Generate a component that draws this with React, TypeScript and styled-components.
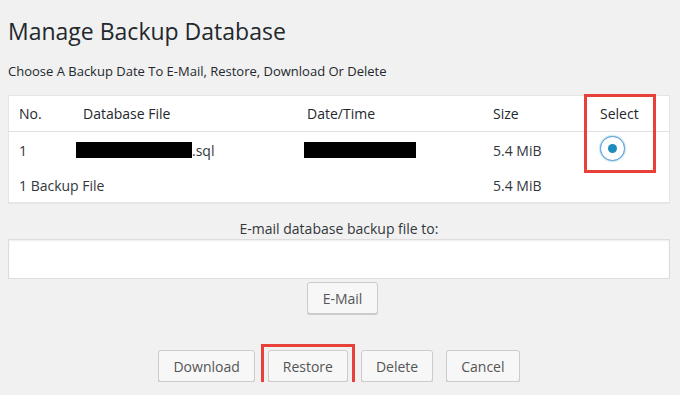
import React from 'react'
import styled, { createGlobalStyle } from 'styled-components'

const GlobalStyle = createGlobalStyle`
  html, body {
    margin: 0;
    padding: 0;
    background: #f1f1f1;
  }
  body {
    font-family: "Open Sans", "Liberation Sans", sans-serif;
    color: #32373c;
  }
`

const columns = '64px 224px 186px 107px 1fr'

const Page = styled.div`
  padding: 17px 10px 0 8px;
`

const Title = styled.h1`
  margin: 0;
  font-size: 23px;
  line-height: 29px;
  font-weight: 400;
  color: #23282d;
`

const Intro = styled.p`
  margin: 16px 0 15px;
  font-size: 13px;
  line-height: 18px;
  color: #23282d;
`

const Table = styled.div`
  position: relative;
  background: #fff;
  border: 1px solid #e5e5e5;
  box-shadow: 0 1px 1px rgba(0, 0, 0, 0.04);
`

const Row = styled.div<{ $height: number; $head?: boolean }>`
  display: grid;
  grid-template-columns: ${columns};
  align-items: center;
  height: ${p => p.$height}px;
  font-size: 14px;
  color: ${p => (p.$head ? '#23282d' : '#32373c')};
  border-bottom: ${p => (p.$head ? '1px solid #e1e1e1' : 'none')};
`

const Cell = styled.div`
  padding-left: 10px;
  white-space: nowrap;
  display: flex;
  align-items: center;
`

const Redacted = styled.span<{ $w: number; $shift: number }>`
  display: inline-block;
  width: ${p => p.$w}px;
  height: 16px;
  margin-left: ${p => p.$shift}px;
  background: #000;
`

const Radio = styled.span`
  box-sizing: border-box;
  width: 25px;
  height: 25px;
  margin-top: -3px;
  border-radius: 50%;
  border: 1px solid #5b9dd9;
  box-shadow: 0 0 2px rgba(30, 140, 190, 0.8);
  background: #fff;
  display: flex;
  align-items: center;
  justify-content: center;
  &::before {
    content: '';
    width: 9px;
    height: 9px;
    border-radius: 50%;
    background: #1e8cbe;
  }
`

const SelectMark = styled.div`
  position: absolute;
  top: -2px;
  left: 575px;
  width: 66px;
  height: 73px;
  border: 3px solid #e8413a;
  pointer-events: none;
`

const EmailLabel = styled.div`
  margin-top: 16px;
  text-align: center;
  font-size: 14px;
  line-height: 19px;
  color: #32373c;
`

const EmailInput = styled.input`
  display: block;
  box-sizing: border-box;
  width: 100%;
  height: 40px;
  margin-top: 1px;
  border: 1px solid #ddd;
  box-shadow: inset 0 1px 2px rgba(0, 0, 0, 0.07);
  background: #fff;
  outline: none;
`

const Button = styled.button`
  box-sizing: border-box;
  height: 32px;
  padding: 0 14px;
  font-family: inherit;
  font-size: 14px;
  color: #555;
  background: #f7f7f7;
  border: 1px solid #ccc;
  border-radius: 3px;
  box-shadow: 0 1px 0 #ccc;
  cursor: pointer;
`

const EmailButtonRow = styled.div`
  display: flex;
  justify-content: center;
  margin-top: 3px;
  padding-left: 7px;

  ${Button} {
    padding: 0 15px;
  }
`

const Actions = styled.div`
  display: flex;
  justify-content: center;
  gap: 13px;
  margin-top: 36px;
`

const Highlight = styled.span`
  position: relative;
  display: inline-flex;
  &::after {
    content: '';
    position: absolute;
    top: -6px;
    left: -7px;
    right: -7px;
    bottom: -8px;
    border: 3px solid #e8413a;
    pointer-events: none;
  }
`

export default function App() {
  return (
    <>
      <GlobalStyle />
      <Page>
        <Title>Manage Backup Database</Title>
        <Intro>Choose A Backup Date To E-Mail, Restore, Download Or Delete</Intro>

        <Table>
          <Row $height={35} $head>
            <Cell>No.</Cell>
            <Cell>Database File</Cell>
            <Cell>Date/Time</Cell>
            <Cell>Size</Cell>
            <Cell>Select</Cell>
          </Row>
          <Row $height={36}>
            <Cell>1</Cell>
            <Cell>
              <Redacted $w={116} $shift={-7} />
              .sql
            </Cell>
            <Cell>
              <Redacted $w={112} $shift={-3} />
            </Cell>
            <Cell>5.4 MiB</Cell>
            <Cell>
              <Radio />
            </Cell>
          </Row>
          <Row $height={34}>
            <Cell>1 Backup File</Cell>
            <Cell />
            <Cell />
            <Cell>5.4 MiB</Cell>
            <Cell />
          </Row>
          <SelectMark />
        </Table>

        <EmailLabel>E-mail database backup file to:</EmailLabel>
        <EmailInput type="text" />
        <EmailButtonRow>
          <Button>E-Mail</Button>
        </EmailButtonRow>

        <Actions>
          <Button>Download</Button>
          <Highlight>
            <Button>Restore</Button>
          </Highlight>
          <Button>Delete</Button>
          <Button>Cancel</Button>
        </Actions>
      </Page>
    </>
  )
}
